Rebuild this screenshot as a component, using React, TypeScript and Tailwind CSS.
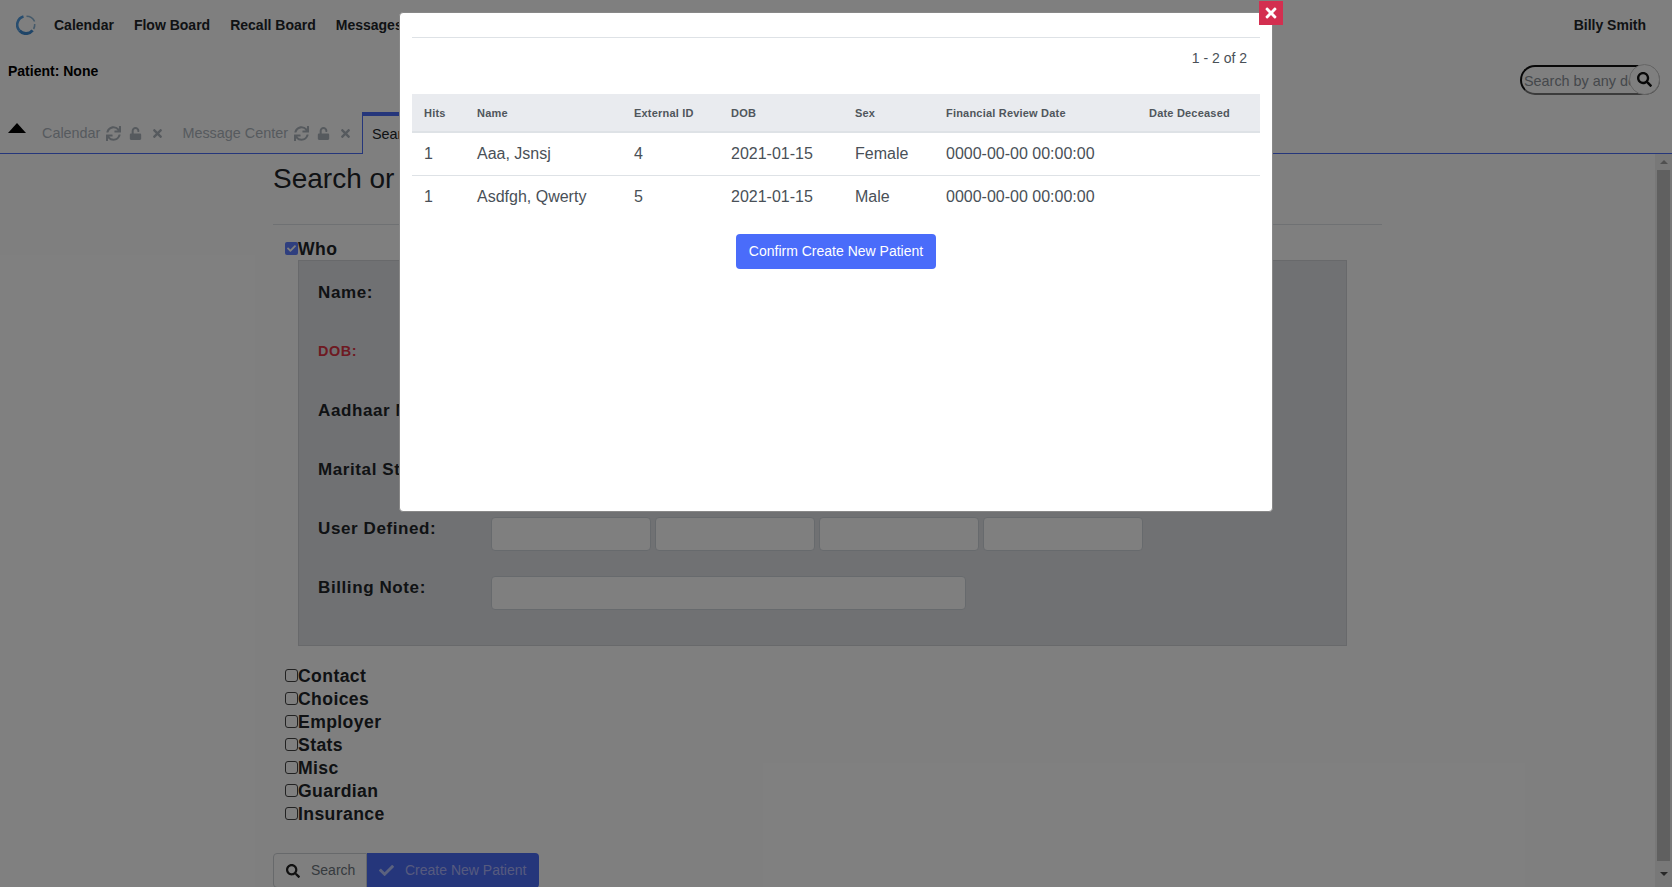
import { FaSync, FaUnlock, FaTimes, FaSearch, FaCheck } from "react-icons/fa";

const font = { fontFamily: '"Liberation Sans", Arial, sans-serif' };

function Tab({ label }: { label: string }) {
  return (
    <div className="flex items-center pt-[2px] pr-[10px] pl-2 text-[14.4px] text-[#adb5bd]">
      <span>{label}</span>
      <FaSync className="ml-[6px] text-[15px]" />
      <FaUnlock className="ml-[8px] text-[13px]" />
      <FaTimes className="ml-[9px] text-[13px]" />
    </div>
  );
}

function Field({ label, red, children }: { label: string; red?: boolean; children?: React.ReactNode }) {
  return (
    <div className="flex h-[59px] items-start">
      <div className={red ? "w-[173px] pt-[5px] text-[14.4px] leading-[20px] font-bold tracking-[0.6px] text-[#dc3545]" : "w-[173px] pt-[6px] text-[17px] leading-[20px] font-bold tracking-[0.6px] text-[#212529]"}>
        {label}
      </div>
      <div className="mt-[4px] flex gap-1">{children}</div>
    </div>
  );
}

function Box({ w }: { w: string }) {
  return <div className={`h-[34px] rounded-[4px] border border-[#ced4da] bg-white ${w}`} />;
}

function Check({ label, on }: { label: string; on?: boolean }) {
  return (
    <div className="flex h-[23px] items-center text-[17.6px] font-bold tracking-[0.4px] text-[#212529]">
      {on ? (
        <span className="flex h-[13px] w-[13px] items-center justify-center rounded-[2px] bg-[#5f7eff] text-white">
          <FaCheck className="text-[9px]" />
        </span>
      ) : (
        <span className="relative -top-[1px] h-[13px] w-[13px] rounded-[3px] border border-[#444] bg-white" />
      )}
      <span className={on ? "relative top-[1px]" : ""}>{label}</span>
    </div>
  );
}

const heads = [
  ["Hits", "w-[53px]"],
  ["Name", "w-[157px]"],
  ["External ID", "w-[97px]"],
  ["DOB", "w-[124px]"],
  ["Sex", "w-[91px]"],
  ["Financial Review Date", "w-[203px]"],
  ["Date Deceased", "w-[123px]"],
];

const rows = [
  ["1", "Aaa, Jsnsj", "4", "2021-01-15", "Female", "0000-00-00 00:00:00", ""],
  ["1", "Asdfgh, Qwerty", "5", "2021-01-15", "Male", "0000-00-00 00:00:00", ""],
];

export default function App() {
  return (
    <div style={font} className="relative flex h-[887px] w-[1672px] flex-col overflow-hidden bg-white">
      <header className="h-[112px] shrink-0 bg-white">
        <div className="flex h-[50px] items-center justify-between pr-[26px] pl-4">
          <div className="flex items-center">
            <svg width="20" height="20" viewBox="0 0 20 20" fill="none" className="mr-[18px]">
              <path d="M7.5 1.6A8.6 8.6 0 0 0 3.2 15.4" stroke="#4f9adf" strokeWidth="2.6" />
              <path d="M3.4 15.6A8.6 8.6 0 0 0 16.6 15.4" stroke="#3f8ad0" strokeWidth="3" />
              <path d="M10.5 1.2A8.8 8.8 0 0 1 18.6 6.5" stroke="#8cb4d4" strokeWidth="1.6" />
              <path d="M18.7 9A8.8 8.8 0 0 1 17.6 14" stroke="#8cb4d4" strokeWidth="1.6" />
            </svg>
            <nav className="flex gap-[20px] text-[14px] font-bold text-[#212529]">
              <span>Calendar</span>
              <span>Flow Board</span>
              <span>Recall Board</span>
              <span>Messages</span>
            </nav>
          </div>
          <span className="text-[14px] font-bold text-[#212529]">Billy Smith</span>
        </div>
        <div className="flex items-start justify-between pr-[12px] pl-2">
          <div className="pt-[13px] text-[14px] leading-4 font-bold text-black">Patient: None</div>
          <div className="relative mt-[14px] h-[31px] w-[140px]">
            <input
              placeholder="Search by any demographics"
              style={font}
              className="mt-[1px] h-[30px] w-full rounded-full border-2 border-t-[#111] border-r-[#888] border-b-[#777] border-l-[#111] bg-white pt-[2px] pl-[2px] text-[14.4px] placeholder:text-[#8a9097]"
            />
            <span className="absolute top-0 right-0 flex h-[31px] w-[31px] items-center justify-center rounded-full border border-[#ccc] bg-white text-[#111]">
              <FaSearch className="text-[15px]" />
            </span>
          </div>
        </div>
      </header>

      <div className="flex h-[42px] shrink-0 items-stretch border-b border-[#4a6cf7]">
        <div className="w-[34px] pt-[11px] pl-2">
          <div className="h-0 w-0 border-x-[9px] border-b-[10px] border-x-transparent border-b-black" />
        </div>
        <Tab label="Calendar" />
        <Tab label="Message Center" />
        <div className="-mb-[1px] flex items-center border-t-[4px] border-l border-[#4a6cf7] bg-white pr-3 pl-[9px] text-[14.4px] text-[#212529]">
          Search or Add Patient
        </div>
      </div>

      <div className="flex min-h-0 flex-1">
        <main className="min-w-0 flex-1 overflow-hidden pr-[273px] pl-[273px]">
          <h1 className="pt-[8px] text-[28px] leading-[34px] font-normal text-[#212529]">Search or Add Patient</h1>
          <div className="mt-[28px] border-t border-[#dee2e6]" />
          <div className="mt-[12px] pl-[12px]">
            <Check label="Who" on />
            <div className="ml-[13px] h-[386px] w-[1049px] border border-[#d0d2d6] bg-[#e1e2e6] pt-[16px] pl-[19px]">
              <Field label="Name:" />
              <Field label="DOB:" red />
              <Field label="Aadhaar Number:" />
              <Field label="Marital Status:" />
              <Field label="User Defined:">
                <Box w="w-[160px]" />
                <Box w="w-[160px]" />
                <Box w="w-[160px]" />
                <Box w="w-[160px]" />
              </Field>
              <Field label="Billing Note:">
                <Box w="w-[475px]" />
              </Field>
            </div>
            <div className="mt-[19px]">
              <Check label="Contact" />
              <Check label="Choices" />
              <Check label="Employer" />
              <Check label="Stats" />
              <Check label="Misc" />
              <Check label="Guardian" />
              <Check label="Insurance" />
            </div>
          </div>
          <div className="mt-[27px] flex h-[35px] text-[14px]">
            <div className="flex w-[94px] items-center gap-[11px] rounded-l-[4px] border border-[#cfd2d6] bg-white pl-3 text-[#6c757d]">
              <FaSearch className="text-[14px] text-[#222]" />
              <span>Search</span>
            </div>
            <div className="flex w-[172px] items-center gap-[11px] rounded-r-[4px] bg-[#4a6cf7] pl-3 text-[#adb5fd]">
              <FaCheck className="text-[15px] text-white/60" />
              <span>Create New Patient</span>
            </div>
          </div>
        </main>
        <div className="flex w-[17px] shrink-0 flex-col items-center bg-[#f1f1f1]">
          <div className="flex h-[16px] w-full items-center justify-center">
            <div className="h-0 w-0 border-x-[4px] border-b-[4px] border-x-transparent border-b-[#a0a0a0]" />
          </div>
          <div className="h-[691px] w-[13px] bg-[#c1c1c1]" />
          <div className="flex flex-1 items-center justify-center">
            <div className="h-0 w-0 border-x-[4px] border-t-[4px] border-x-transparent border-t-[#505050]" />
          </div>
        </div>
      </div>

      <div className="absolute inset-0 bg-black/50" />

      <div className="absolute top-[12px] left-[399px] h-[500px] w-[874px] rounded-[4px] border border-[#888] bg-white px-3 pt-[24px]">
        <div className="border-t border-[#dee2e6] pt-[11px] pr-[13px] text-right text-[14px] leading-[18px] text-[#495057]">1 - 2 of 2</div>
        <table className="mt-[27px] w-[848px] table-fixed border-collapse text-left">
          <thead>
            <tr className="h-[38px] border-b-2 border-[#dee2e6] bg-[#e9ebef]">
              {heads.map(([h, w]) => (
                <th key={h} className={`${w} pt-[2px] pl-3 text-[11px] font-bold tracking-[0.2px] text-[#50565c]`}>
                  {h}
                </th>
              ))}
            </tr>
          </thead>
          <tbody>
            {rows.map((r) => (
              <tr key={r[1]} className="h-[43px] border-b border-[#dee2e6] last:border-b-0">
                {r.map((c, i) => (
                  <td key={i} className="pl-3 text-[16px] text-[#495057]">
                    {c}
                  </td>
                ))}
              </tr>
            ))}
          </tbody>
        </table>
        <div className="mt-[16px] flex justify-center">
          <div className="flex h-[35px] w-[200px] items-center justify-center rounded-[4px] bg-[#4a6cfa] text-[14px] text-white">
            Confirm Create New Patient
          </div>
        </div>
      </div>

      <div className="absolute top-[1px] left-[1259px] flex h-[24px] w-[24px] items-center justify-center bg-[#d32f50] text-white">
        <FaTimes className="text-[16px]" />
      </div>
    </div>
  );
}
